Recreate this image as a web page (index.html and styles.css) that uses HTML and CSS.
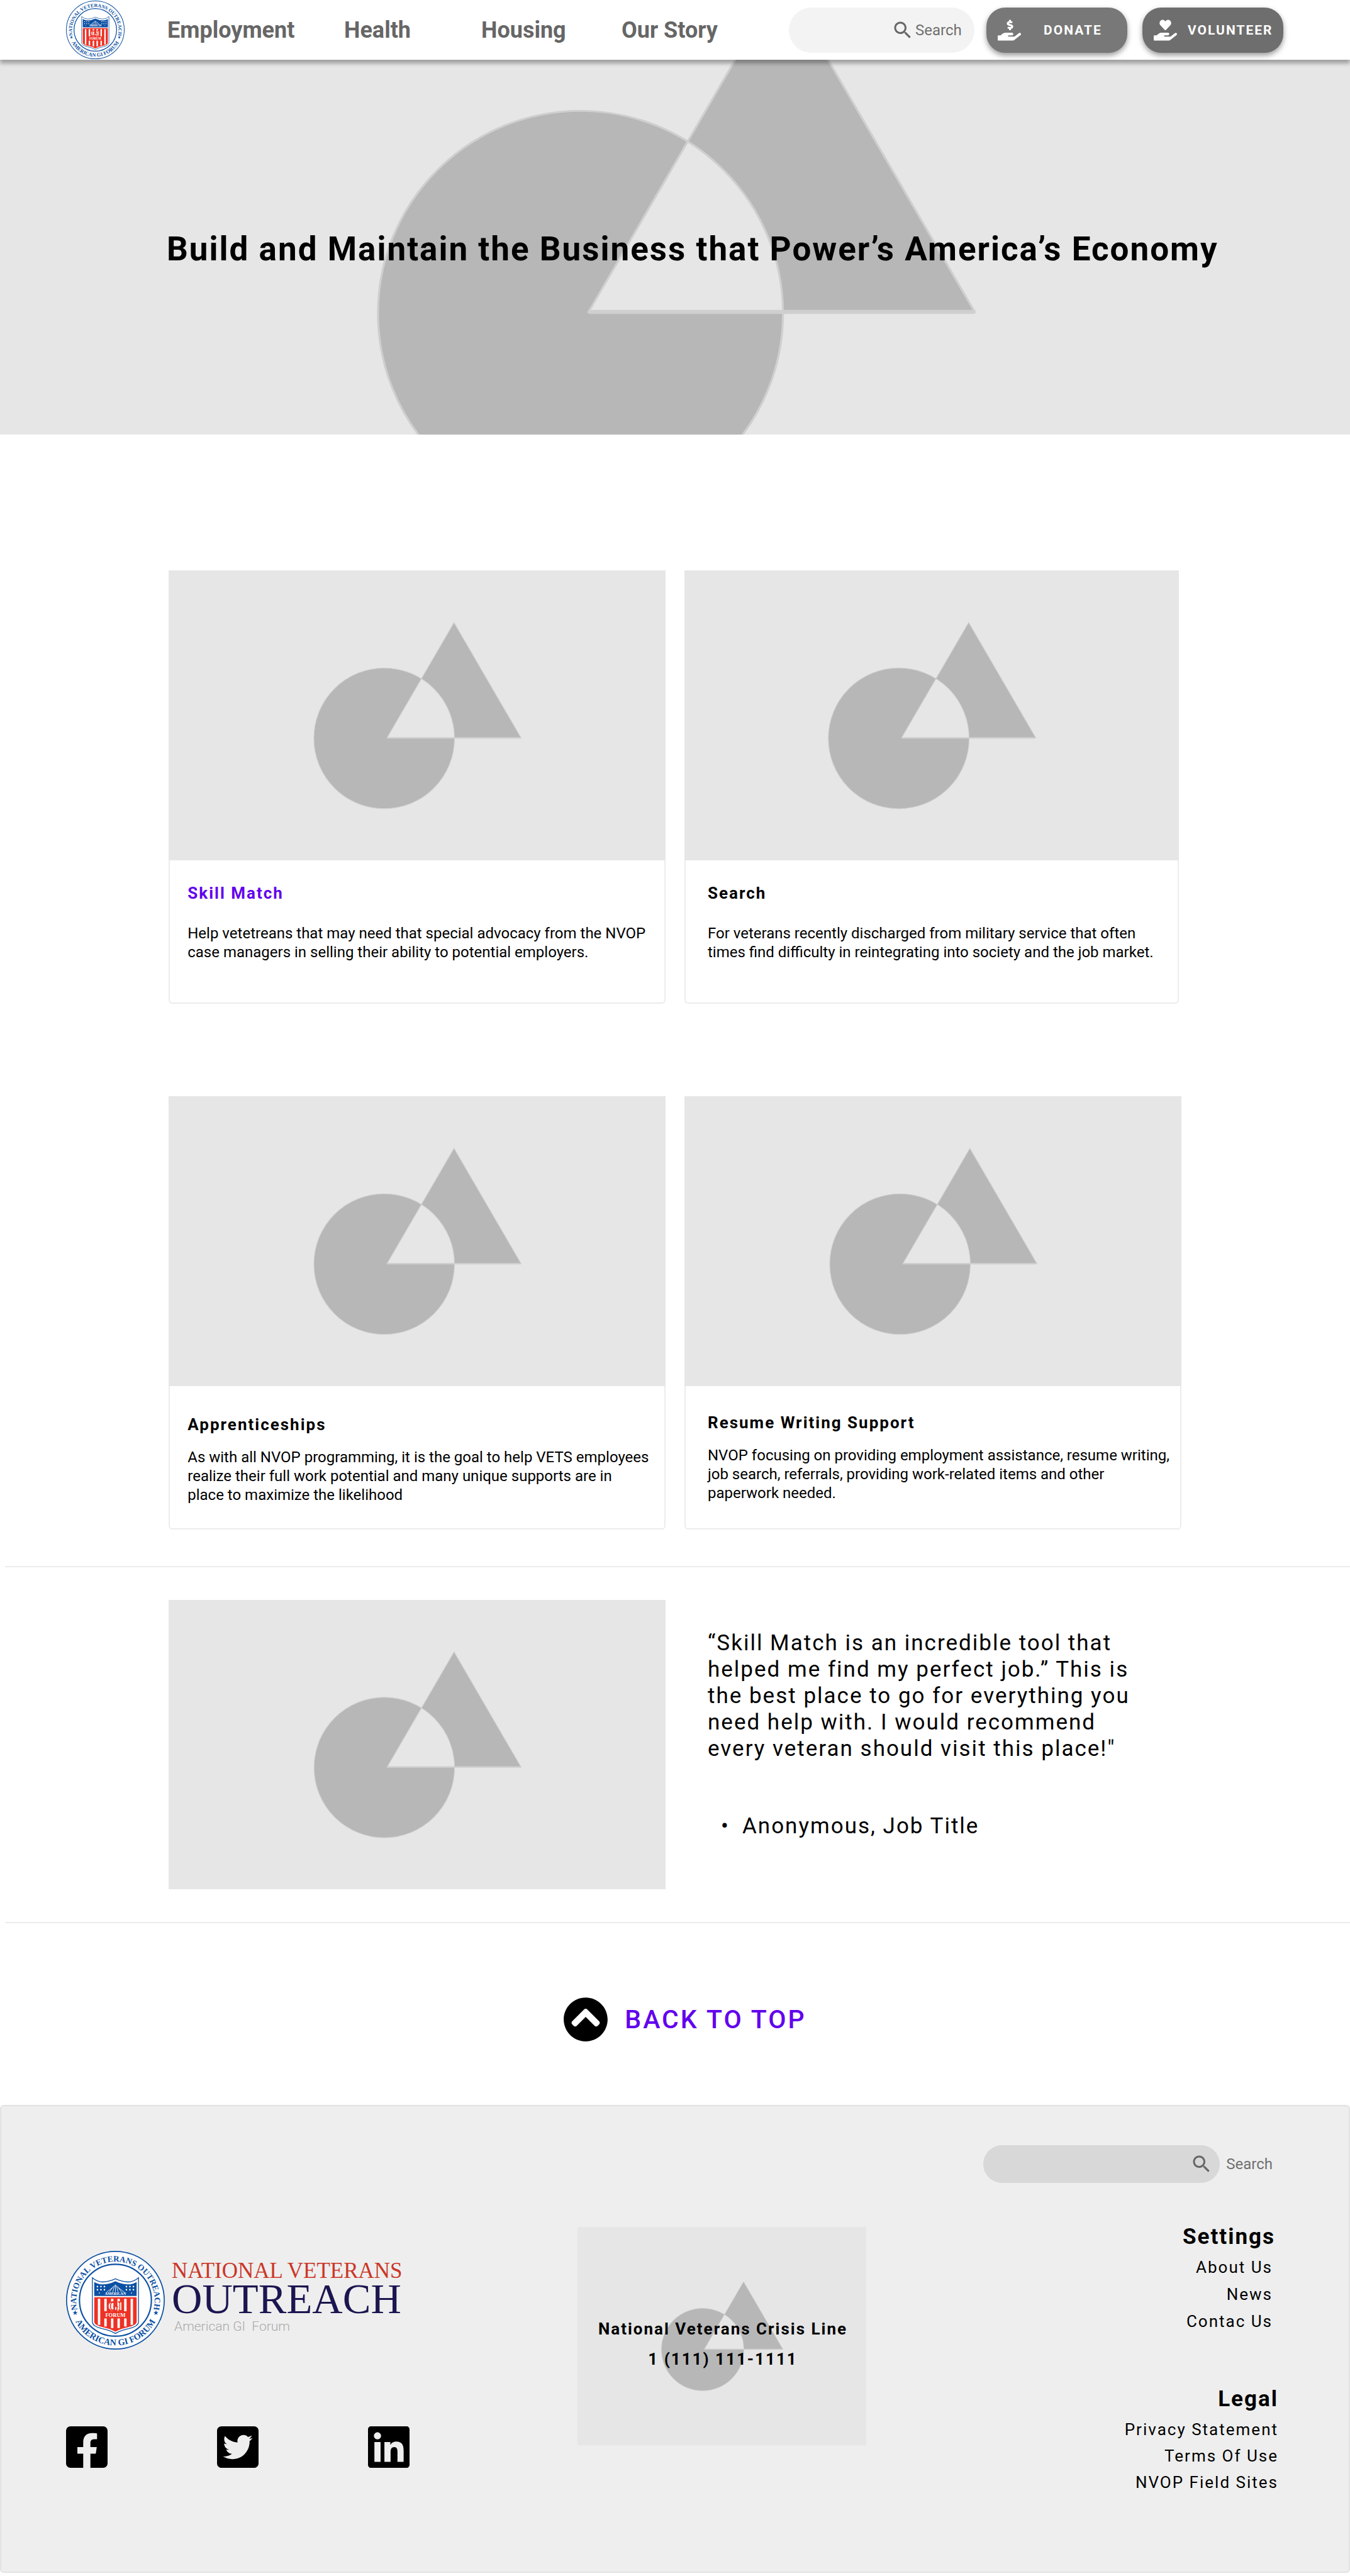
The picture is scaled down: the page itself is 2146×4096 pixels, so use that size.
FILE: index.html
```html
<!DOCTYPE html>
<html lang="en">
<head>
  <meta charset="utf-8">
  <meta name="viewport" content="width=device-width, initial-scale=1">
  <title>Employment | National Veterans Outreach</title>
  <link rel="stylesheet" href="styles.css">
</head>
<body id="top">
  <svg class="defs" aria-hidden="true">
    <defs>
      <!-- Placeholder artwork: circle and triangle, origin at the picture's centre -->
      <g id="art">
        <path class="art-shape" fill-rule="evenodd" d="M-220 49a150 150 0 1 0 300 0a150 150 0 1 0 -300 0zM-64 48L222 48L79 -198z"/>
        <path class="art-edge" d="M-64 48H222"/>
      </g>
      <path id="i-search" d="M15.5 14h-.79l-.28-.27C15.41 12.59 16 11.11 16 9.5 16 5.91 13.09 3 9.5 3S3 5.91 3 9.5 5.91 16 9.5 16c1.61 0 3.09-.59 4.23-1.57l.27.28v.79l5 4.99L20.49 19l-4.99-5zm-6 0C7.01 14 5 11.99 5 9.5S7.01 5 9.5 5 14 7.01 14 9.5 11.99 14 9.5 14z"/>
      <path id="ring-top" d="M-144 26A146 146 0 1 1 144 26"/>
      <path id="ring-bottom" d="M-155 67A169 169 0 0 0 155 67"/>
      <path id="star" d="M0 -10L2.4 -3.1H9.5L3.8 1.2L5.9 8.1L0 4L-5.9 8.1L-3.8 1.2L-9.5 -3.1H-2.4z"/>
      <g id="seal">
        <circle r="182" fill="#fff" stroke="#0c50a3" stroke-width="4"/>
        <circle r="134" fill="#fff" stroke="#0c50a3" stroke-width="5"/>
        <text class="seal-ring" font-size="31"><textPath href="#ring-top" startOffset="50%" text-anchor="middle">NATIONAL VETERANS OUTREACH</textPath></text>
        <text class="seal-ring" font-size="33"><textPath href="#ring-bottom" startOffset="50%" text-anchor="middle">AMERICAN GI FORUM</textPath></text>
        <use href="#star" x="-150" y="47" fill="#0c50a3"/>
        <use href="#star" x="151" y="47" fill="#0c50a3"/>
        <path fill="#fff" stroke="#0c50a3" stroke-width="3" d="M-86 -84Q-68 -68 -46 -68Q-22 -70 0 -80Q22 -70 46 -68Q68 -68 86 -84V82Q84 98 50 106Q20 112 0 124Q-20 112 -50 106Q-84 98 -86 82z"/>
        <path fill="#0c50a3" d="M-79 -68Q-62 -58 -44 -59Q-20 -61 0 -71Q20 -61 44 -59Q62 -58 79 -68V-16H-79z"/>
        <path stroke="#fff" stroke-width="2" fill="none" d="M-3 -56L-10 -30M3 -56L10 -30M-7 -52L-23 -30M7 -52L23 -30M-11 -47L-35 -28M11 -47L35 -28M0 -58V-30"/>
        <g fill="#fff">
          <circle cx="-67" cy="-51" r="3"/><circle cx="-54" cy="-51" r="3"/><circle cx="-41" cy="-51" r="3"/>
          <circle cx="-67" cy="-39" r="3"/><circle cx="-54" cy="-39" r="3"/><circle cx="-41" cy="-39" r="3"/>
          <circle cx="67" cy="-51" r="3"/><circle cx="54" cy="-51" r="3"/><circle cx="41" cy="-51" r="3"/>
          <circle cx="67" cy="-39" r="3"/><circle cx="54" cy="-39" r="3"/><circle cx="41" cy="-39" r="3"/>
          <circle cx="-60" cy="-27" r="2"/><circle cx="60" cy="-27" r="2"/>
        </g>
        <text class="seal-word" y="-20" font-size="14" fill="#fff">AMERICAN</text>
        <path fill="#ee3124" d="M-79 -11H79V82Q76 94 48 100Q20 106 0 117Q-20 106 -48 100Q-76 94 -79 82z"/>
        <path stroke="#fff" stroke-width="9" d="M-61 -5V92M-37 -5V98M-12 -5V104M12 -5V104M37 -5V98M61 -5V92"/>
        <path fill="#ee3124" d="M-44 41H44V68H-44z"/>
        <text class="seal-word" y="38" font-size="50" fill="#fff" stroke="#ee3124" stroke-width="3">GI</text>
        <text class="seal-word" y="62" font-size="20" fill="#fff">FORUM</text>
      </g>
    </defs>
  </svg>

  <header class="header">
    <a class="header-logo" href="#top" aria-label="National Veterans Outreach home">
      <svg class="seal seal-small" viewBox="-184 -184 368 368" aria-hidden="true"><use href="#seal"/></svg>
    </a>
    <nav class="nav" aria-label="Main">
      <a href="#employment">Employment</a>
      <a href="#health">Health</a>
      <a href="#housing">Housing</a>
      <a href="#story">Our Story</a>
    </nav>
    <div class="actions">
      <form class="search" role="search">
        <svg class="icon-search" viewBox="0 0 24 24" aria-hidden="true"><use href="#i-search"/></svg>
        <input type="text" placeholder="Search" aria-label="Search">
      </form>
      <button class="btn btn-donate" type="button">
        <svg viewBox="0 0 576 512" aria-hidden="true"><path d="M271.06,144.3l54.27,14.3a8.59,8.59,0,0,1,6.63,8.1c0,4.6-4.09,8.4-9.12,8.4h-35.6a30,30,0,0,1-11.19-2.2c-5.24-2.2-11.28-1.7-15.3,2l-19,17.5a11.68,11.68,0,0,0-2.25,2.66,11.42,11.42,0,0,0,3.88,15.74,83.77,83.77,0,0,0,34.51,11.5V240c0,8.8,7.83,16,17.37,16h17.37c9.55,0,17.38-7.2,17.38-16V222.4c32.93-3.6,57.84-31,53.5-63-3.15-23-22.46-41.3-46.56-47.7L282.68,97.4a8.59,8.59,0,0,1-6.63-8.1c0-4.6,4.09-8.4,9.12-8.4h35.6A30,30,0,0,1,332,83.1c5.23,2.2,11.28,1.7,15.3-2l19-17.5A11.31,11.31,0,0,0,368.47,61a11.43,11.43,0,0,0-3.84-15.78,83.82,83.82,0,0,0-34.52-11.5V16c0-8.8-7.82-16-17.37-16H295.37C285.82,0,278,7.2,278,16V33.6c-32.89,3.6-57.85,31-53.51,63C227.63,119.6,247,137.9,271.06,144.3ZM565.27,328.1c-11.8-10.7-30.2-10-42.6,0L430.27,402a63.64,63.64,0,0,1-40,14H272a16,16,0,0,1,0-32h78.29c15.9,0,30.71-10.9,33.25-26.6a31.2,31.2,0,0,0,.46-5.46A32,32,0,0,0,352,320H192a117.66,117.66,0,0,0-74.1,26.29L71.4,384H16A16,16,0,0,0,0,400v96a16,16,0,0,0,16,16H372.77a64,64,0,0,0,40-14L564,377a32,32,0,0,0,1.28-48.9Z"/></svg>
        <span>DONATE</span>
      </button>
      <button class="btn btn-volunteer" type="button">
        <svg viewBox="0 0 576 512" aria-hidden="true"><path d="M275.3 250.5c7 7.4 18.4 7.4 25.5 0l108.9-114.2c31.6-33.2 29.8-88.2-5.6-118.8-30.8-26.7-76.7-21.9-104.9 7.7L288 36.9l-11.1-11.6C248.7-4.4 202.8-9.2 172 17.5c-35.3 30.6-37.2 85.6-5.6 118.8l108.9 114.2zm290 77.6c-11.8-10.7-30.2-10-42.6 0L430.3 402c-11.3 9.1-25.4 14-40 14H272c-8.8 0-16-7.2-16-16s7.2-16 16-16h78.3c15.9 0 30.7-10.9 33.3-26.6 3.3-20-12.1-37.4-31.6-37.4H192c-27 0-53.1 9.3-74.1 26.3L71.4 384H16c-8.8 0-16 7.2-16 16v96c0 8.8 7.2 16 16 16h356.8c14.5 0 28.6-4.9 40-14L564 377c15.2-12.1 16.4-35.3 1.3-48.9z"/></svg>
        <span>VOLUNTEER</span>
      </button>
    </div>
  </header>

  <main>
    <section class="hero">
      <svg class="hero-art" viewBox="-500 -139 1000 278" preserveAspectRatio="xMidYMid slice" aria-hidden="true"><use href="#art"/></svg>
      <h1>Build and Maintain the Business that Power’s America’s Economy</h1>
    </section>

    <section class="programs" id="employment">
      <div class="row row-first">
        <article class="card">
          <svg class="picture" viewBox="-530 -309 1060 618" aria-hidden="true"><use href="#art"/></svg>
          <div class="card-body">
            <h2><a href="#skill-match">Skill Match</a></h2>
            <p>Help vetetreans that may need that special advocacy from the NVOP case managers in selling their ability to potential employers.</p>
          </div>
        </article>
        <article class="card card-wide">
          <svg class="picture" viewBox="-530 -309 1060 618" preserveAspectRatio="xMidYMid slice" aria-hidden="true"><use href="#art"/></svg>
          <div class="card-body">
            <h2>Search</h2>
            <p>For veterans recently discharged from military service that often times find difficulty in reintegrating into society and the job market.</p>
          </div>
        </article>
      </div>
      <div class="row row-second">
        <article class="card">
          <svg class="picture" viewBox="-530 -309 1060 618" aria-hidden="true"><use href="#art"/></svg>
          <div class="card-body">
            <h2>Apprenticeships</h2>
            <p>As with all NVOP programming, it is the goal to help VETS employees realize their full work potential and many unique supports are in place to maximize the likelihood</p>
          </div>
        </article>
        <article class="card card-wide">
          <svg class="picture" viewBox="-530 -309 1060 618" aria-hidden="true"><use href="#art"/></svg>
          <div class="card-body">
            <h2>Resume Writing Support</h2>
            <p>NVOP focusing on providing employment assistance, resume writing, job search, referrals, providing work-related items and other paperwork needed.</p>
          </div>
        </article>
      </div>
    </section>

    <section class="testimonial">
      <svg class="picture" viewBox="-530 -309 1060 618" aria-hidden="true"><use href="#art"/></svg>
      <div class="quote">
        <blockquote>“Skill Match is an incredible tool that helped me find my perfect job.” This is the best place to go for everything you need help with. I would recommend every veteran should visit this place!"</blockquote>
        <ul>
          <li>Anonymous, Job Title</li>
        </ul>
      </div>
    </section>

    <a class="back-to-top" href="#top">
      <svg viewBox="0 0 512 512" aria-hidden="true"><path d="M8 256C8 119 119 8 256 8s248 111 248 248-111 248-248 248S8 393 8 256zm231-113.9L103.5 277.6c-9.4 9.4-9.4 24.6 0 33.9l17 17c9.4 9.4 24.6 9.4 33.9 0L256 226.9l101.6 101.6c9.4 9.4 24.6 9.4 33.9 0l17-17c9.4-9.4 9.4-24.6 0-33.9L273 142.1c-9.4-9.4-24.6-9.4-34 0z"/></svg>
      <span>BACK TO TOP</span>
    </a>
  </main>

  <footer class="footer">
    <form class="footer-search" role="search">
      <div class="footer-search-box">
        <input type="text" id="footer-search">
        <svg class="icon-search" viewBox="0 0 24 24" aria-hidden="true"><use href="#i-search"/></svg>
      </div>
      <label for="footer-search">Search</label>
    </form>
    <div class="footer-columns">
      <div class="brand">
        <a class="brand-logo" href="#top">
          <svg class="seal seal-large" viewBox="-184 -184 368 368" aria-hidden="true"><use href="#seal"/></svg>
          <span class="brand-name">
            <span class="brand-line1">NATIONAL VETERANS</span>
            <span class="brand-line2">OUTREACH</span>
            <span class="brand-line3">American GI&nbsp; Forum</span>
          </span>
        </a>
        <div class="social">
          <a href="#facebook" aria-label="Facebook"><svg viewBox="0 32 448 448" aria-hidden="true"><path d="M400 32H48A48 48 0 0 0 0 80v352a48 48 0 0 0 48 48h137.25V327.69h-63V256h63v-54.64c0-62.15 37-96.48 93.67-96.48 27.14 0 55.52 4.84 55.52 4.84v61h-31.27c-30.81 0-40.42 19.12-40.42 38.73V256h68.78l-11 71.69h-57.78V480H400a48 48 0 0 0 48-48V80a48 48 0 0 0-48-48z"/></svg></a>
          <a href="#twitter" aria-label="Twitter"><svg viewBox="0 32 448 448" aria-hidden="true"><path d="M400 32H48C21.5 32 0 53.5 0 80v352c0 26.5 21.5 48 48 48h352c26.5 0 48-21.5 48-48V80c0-26.5-21.5-48-48-48zm-48.9 158.8c.2 2.8.2 5.7.2 8.5 0 86.7-66 186.6-186.6 186.6-37.2 0-71.7-10.8-100.7-29.4 5.3.6 10.4.8 15.8.8 30.7 0 58.9-10.4 81.4-28-28.8-.6-53-19.5-61.3-45.5 10.1 1.5 19.2 1.5 29.6-1.2-30-6.1-52.5-32.5-52.5-64.4v-.8c8.7 4.9 18.9 7.9 29.6 8.3a65.447 65.447 0 0 1-29.2-54.6c0-12.2 3.2-23.4 8.9-33.1 32.3 39.8 80.8 65.8 135.2 68.6-9.3-44.5 24-80.6 64-80.6 18.9 0 35.9 7.9 47.9 20.7 14.8-2.8 29-8.3 41.6-15.8-4.9 15.2-15.2 28-28.8 36.1 13.2-1.4 26-5.1 37.8-10.2-8.9 13.1-20.1 24.7-32.9 34z"/></svg></a>
          <a href="#linkedin" aria-label="LinkedIn"><svg viewBox="0 32 448 448" aria-hidden="true"><path d="M416 32H31.9C14.3 32 0 46.5 0 64.3v383.4C0 465.5 14.3 480 31.9 480H416c17.6 0 32-14.5 32-32.3V64.3c0-17.8-14.4-32.3-32-32.3zM135.4 416H69V202.2h66.5V416zm-33.2-243c-21.3 0-38.5-17.3-38.5-38.5S80.9 96 102.2 96c21.2 0 38.5 17.3 38.5 38.5 0 21.3-17.2 38.5-38.5 38.5zm282.1 243h-66.4V312c0-24.8-.5-56.7-34.5-56.7-34.6 0-39.9 27-39.9 54.9V416h-66.4V202.2h63.7v29.2h.9c8.9-16.8 30.6-34.5 62.9-34.5 67.2 0 79.7 44.3 79.7 101.9V416z"/></svg></a>
        </div>
      </div>
      <div class="crisis">
        <svg class="picture" viewBox="-525 -397 1050 794" aria-hidden="true"><use href="#art"/></svg>
        <p>National Veterans Crisis Line<br>1 (111) 111-1111</p>
      </div>
      <div class="links">
        <section class="links-settings">
          <h2>Settings</h2>
          <ul>
            <li><a href="#about">About Us</a></li>
            <li><a href="#news">News</a></li>
            <li><a href="#contact">Contac Us</a></li>
          </ul>
        </section>
        <section class="links-legal">
          <h2>Legal</h2>
          <ul>
            <li><a href="#privacy">Privacy Statement</a></li>
            <li><a href="#terms">Terms Of Use</a></li>
            <li><a href="#sites">NVOP Field Sites</a></li>
          </ul>
        </section>
      </div>
    </div>
  </footer>
</body>
</html>
```
FILE: styles.css
```css
* {
  box-sizing: border-box;
}

body {
  margin: 0;
  background: #fff;
  color: #000;
  font-family: Roboto, "Liberation Sans", sans-serif;
  font-size: 24px;
  line-height: 30px;
}

h1, h2, p, ul, blockquote {
  margin: 0;
  padding: 0;
}

a {
  color: inherit;
  text-decoration: none;
}

svg {
  display: block;
  flex: none;
}

input {
  min-width: 0;
  padding: 0;
  border: 0;
  background: none;
  color: #6b6b6b;
  font: inherit;
  appearance: none;
  outline: none;
}

input::placeholder {
  color: #707070;
  opacity: 1;
}

.defs {
  position: absolute;
  width: 0;
  height: 0;
}

.art-shape {
  fill: #b7b7b7;
  stroke: #cfcfcf;
  stroke-width: 1.5;
}

.art-edge {
  fill: none;
  stroke: #cfcfcf;
  stroke-width: 3;
}

.seal-ring {
  fill: #0c50a3;
  font-family: "Liberation Serif", serif;
  font-weight: 700;
}

.seal-word {
  font-family: "Liberation Serif", serif;
  font-weight: 700;
  text-anchor: middle;
}

.icon-search {
  width: 36px;
  height: 36px;
  fill: #666;
}

/* Header */

.header {
  position: relative;
  z-index: 1;
  display: flex;
  align-items: center;
  min-height: 95px;
  padding: 0 106px 0 105px;
  background: #fff;
  box-shadow: 0 6px 6px rgba(0, 0, 0, 0.3);
}

.seal-small {
  width: 93px;
  height: 93px;
}

.nav {
  display: grid;
  grid-template-columns: 281px 218px 223px auto;
  margin-left: 68px;
  color: #666;
  font-size: 36px;
  font-weight: 700;
  line-height: 42px;
}

.actions {
  display: flex;
  align-items: center;
  margin-left: auto;
}

.search {
  display: flex;
  align-items: center;
  justify-content: flex-end;
  width: 295px;
  height: 72px;
  margin-right: 19px;
  padding-right: 16px;
  border-radius: 36px;
  background: #f3f3f3;
}

.search input {
  width: 78px;
  margin-left: 2px;
}

.btn {
  display: flex;
  align-items: center;
  width: 224px;
  height: 72px;
  padding: 0 0 0 18px;
  border: 0;
  border-radius: 30px;
  box-shadow: 0 4px 8px rgba(0, 0, 0, 0.4);
  color: #fff;
  font-family: inherit;
  font-size: 21px;
  font-weight: 700;
  letter-spacing: 2px;
}

.btn svg {
  width: 37px;
  height: 34px;
  fill: #fff;
}

.btn-donate {
  gap: 36px;
  margin-right: 24px;
  background: #787878;
}

.btn-volunteer {
  gap: 17px;
  background: #6e6e6e;
}

/* Hero */

.hero {
  display: grid;
  align-items: center;
  background: #e6e6e6;
}

.hero > * {
  grid-area: 1 / 1;
}

.hero-art {
  width: 100%;
  height: 596px;
}

.hero h1 {
  padding: 6px 0 0 265px;
  font-size: 53px;
  line-height: 64px;
  letter-spacing: 2px;
}

/* Program cards */

.programs {
  padding: 216px 12.5% 0;
}

.row {
  display: grid;
  grid-template-columns: 1fr 1fr;
  gap: 30px;
}

.row-first {
  padding-right: 4px;
  grid-template-columns: 790fr 786fr;
  margin-bottom: 147px;
}

.card {
  display: flex;
  flex-direction: column;
}

.picture {
  width: 100%;
  background: #e6e6e6;
}

.card .picture {
  height: 461px;
}

.card-body {
  flex: 1;
  min-height: 228px;
  padding: 36px 21px 36px 28px;
  border: 2px solid #ececec;
  border-top: 0;
  border-radius: 0 0 6px 6px;
}

.card-wide .card-body {
  padding-right: 8px;
  padding-left: 35px;
}

.row-first .card-wide .card-body {
  padding-right: 21px;
}

.card h2 {
  margin-bottom: 33px;
  font-size: 26px;
  line-height: 32px;
  letter-spacing: 2px;
}

.card h2 a {
  color: #6200ee;
}

.row-second .card-body {
  padding-top: 45px;
}

.row-second .card-wide .card-body {
  padding-top: 42px;
}

.row-second h2 {
  margin-bottom: 21px;
}

/* Testimonial */

.testimonial {
  display: grid;
  grid-template-columns: 790fr 820fr;
  gap: 67px;
  margin: 58px 0 0 8px;
  padding: 52px 201px 52px 260px;
  border: solid #ececec;
  border-width: 2px 0;
}

.testimonial .picture {
  height: 460px;
}

.quote {
  max-width: 700px;
  padding-top: 48px;
  font-size: 35px;
  line-height: 42px;
  letter-spacing: 2px;
}

.quote blockquote {
  margin-bottom: 81px;
}

.quote ul {
  padding-left: 21px;
  list-style: none;
}

.quote li {
  display: flex;
}

.quote li::before {
  content: "•";
  width: 34px;
}

/* Back to top */

.back-to-top {
  display: flex;
  align-items: center;
  justify-content: center;
  gap: 26px;
  padding: 117px 0 100px 31px;
  color: #6200ee;
  font-size: 41px;
  font-weight: 500;
  line-height: 48px;
  letter-spacing: 3px;
}

.back-to-top svg {
  width: 72px;
  height: 72px;
  fill: #000;
}

/* Footer */

.footer {
  min-height: 744px;
  margin-bottom: 5px;
  padding: 62px 112px 0 103px;
  border: 2px solid #e2e2e2;
  border-radius: 6px;
  background: #eee;
}

.footer-search {
  display: flex;
  align-items: center;
  justify-content: flex-end;
  gap: 10px;
  padding-right: 9px;
  color: #707070;
}

.footer-search-box {
  display: flex;
  align-items: center;
  width: 376px;
  height: 60px;
  padding: 0 11px 0 30px;
  border-radius: 30px;
  background: #d8d8d8;
}

.footer-search-box input {
  flex: 1;
}

.footer-columns {
  display: flex;
  justify-content: space-between;
  margin-top: 66px;
}

.brand {
  width: 536px;
  padding-top: 42px;
}

.brand-logo {
  display: flex;
  gap: 11px;
}

.seal-large {
  width: 157px;
  height: 157px;
}

.brand-name {
  display: flex;
  flex-direction: column;
  padding-top: 14px;
  font-family: "Liberation Serif", serif;
  white-space: nowrap;
}

.brand-line1 {
  color: #cb3727;
  font-size: 35px;
  line-height: 36px;
}

.brand-line2 {
  color: #1b1650;
  font-size: 67px;
  line-height: 52px;
}

.brand-line3 {
  padding: 3px 0 0 4px;
  color: #aaa;
  font-family: Roboto, "Liberation Sans", sans-serif;
  font-size: 21px;
  font-weight: 300;
  line-height: 30px;
}

.social {
  display: flex;
  gap: 174px;
  margin-top: 122px;
}

.social svg {
  width: 66px;
  height: 66px;
}

.crisis {
  display: grid;
  align-items: center;
  width: 459px;
  height: 347px;
  margin-top: 4px;
}

.crisis > * {
  grid-area: 1 / 1;
}

.crisis .picture {
  height: 347px;
}

.crisis p {
  padding: 24px 0 0 4px;
  font-size: 26px;
  font-weight: 700;
  line-height: 48px;
  letter-spacing: 2px;
  text-align: center;
}

.links {
  width: 379px;
  font-size: 26px;
  letter-spacing: 2px;
  text-align: right;
}

.links h2 {
  margin-bottom: 7px;
  font-size: 35px;
  line-height: 40px;
  letter-spacing: 2px;
}

.links ul {
  list-style: none;
}

.links-settings {
  margin-bottom: 82px;
  padding-right: 5px;
  line-height: 43px;
}

.links-settings ul {
  padding-right: 4px;
}

.links-legal {
  line-height: 42px;
}
```
